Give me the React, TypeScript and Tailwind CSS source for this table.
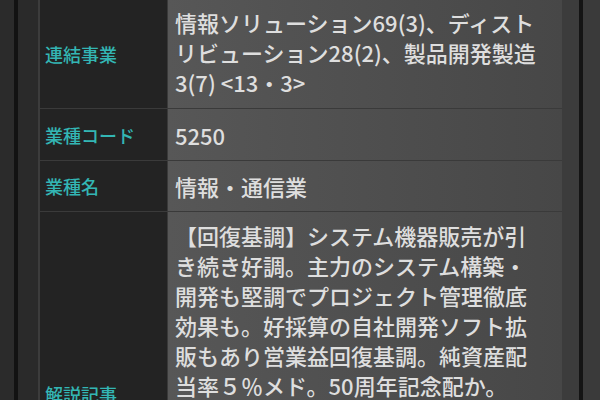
const rows: { label: string; value: string; rowClass: string; valueClass: string }[] = [
  {
    label: "連結事業",
    value: "情報ソリューション69(3)、ディストリビューション28(2)、製品開発製造3(7) <13・3>",
    rowClass: "",
    valueClass: "pt-[8px] pb-[11px]",
  },
  { label: "業種コード", value: "5250", rowClass: "h-[51px]", valueClass: "flex items-center" },
  { label: "業種名", value: "情報・通信業", rowClass: "h-[50px]", valueClass: "flex items-center" },
  {
    label: "解説記事",
    value:
      "【回復基調】システム機器販売が引き続き好調。主力のシステム構築・開発も堅調でプロジェクト管理徹底効果も。好採算の自社開発ソフト拡販もあり営業益回復基調。純資産配当率５％メド。50周年記念配か。",
    rowClass: "h-[364px]",
    valueClass: "pt-[8px]",
  },
];

export default function App() {
  return (
    <div className="flex h-[400px] w-[600px] overflow-hidden bg-[#2a2a2a] font-['Noto_Sans_CJK_JP',sans-serif]">
      {/* left frame */}
      <div className="w-[14px] shrink-0 bg-[#2b2b2b]" />
      <div className="w-[4px] shrink-0 bg-[#121212]" />
      <div className="w-[20px] shrink-0 bg-[#2a2a2a]" />

      {/* table */}
      <div className="-mt-px grid h-fit shrink-0 grid-cols-[127px_394px] gap-px border-l-2 border-[#3c3c3c] bg-[#3a3a3a]">
        {rows.map((r) => (
          <div key={r.label} className="contents">
            <div className={`flex items-center bg-[#232323] pl-[5px] ${r.rowClass}`}>
              <span className="text-[18px] font-medium leading-none text-[#33b6b4]">{r.label}</span>
            </div>
            <div
              className={`bg-gradient-to-r from-[#575757] to-[#474747] pl-[7px] ${r.rowClass} ${r.valueClass}`}
            >
              <p className="w-[366px] text-[22px] font-medium leading-[30px] text-[#dedede]">{r.value}</p>
            </div>
          </div>
        ))}
      </div>

      {/* right frame */}
      <div className="w-[17px] shrink-0 bg-[#3c3c3c]" />
      <div className="w-[4px] shrink-0 bg-[#141414]" />
      <div className="flex-1 bg-[#3a3a3a]" />
    </div>
  );
}
